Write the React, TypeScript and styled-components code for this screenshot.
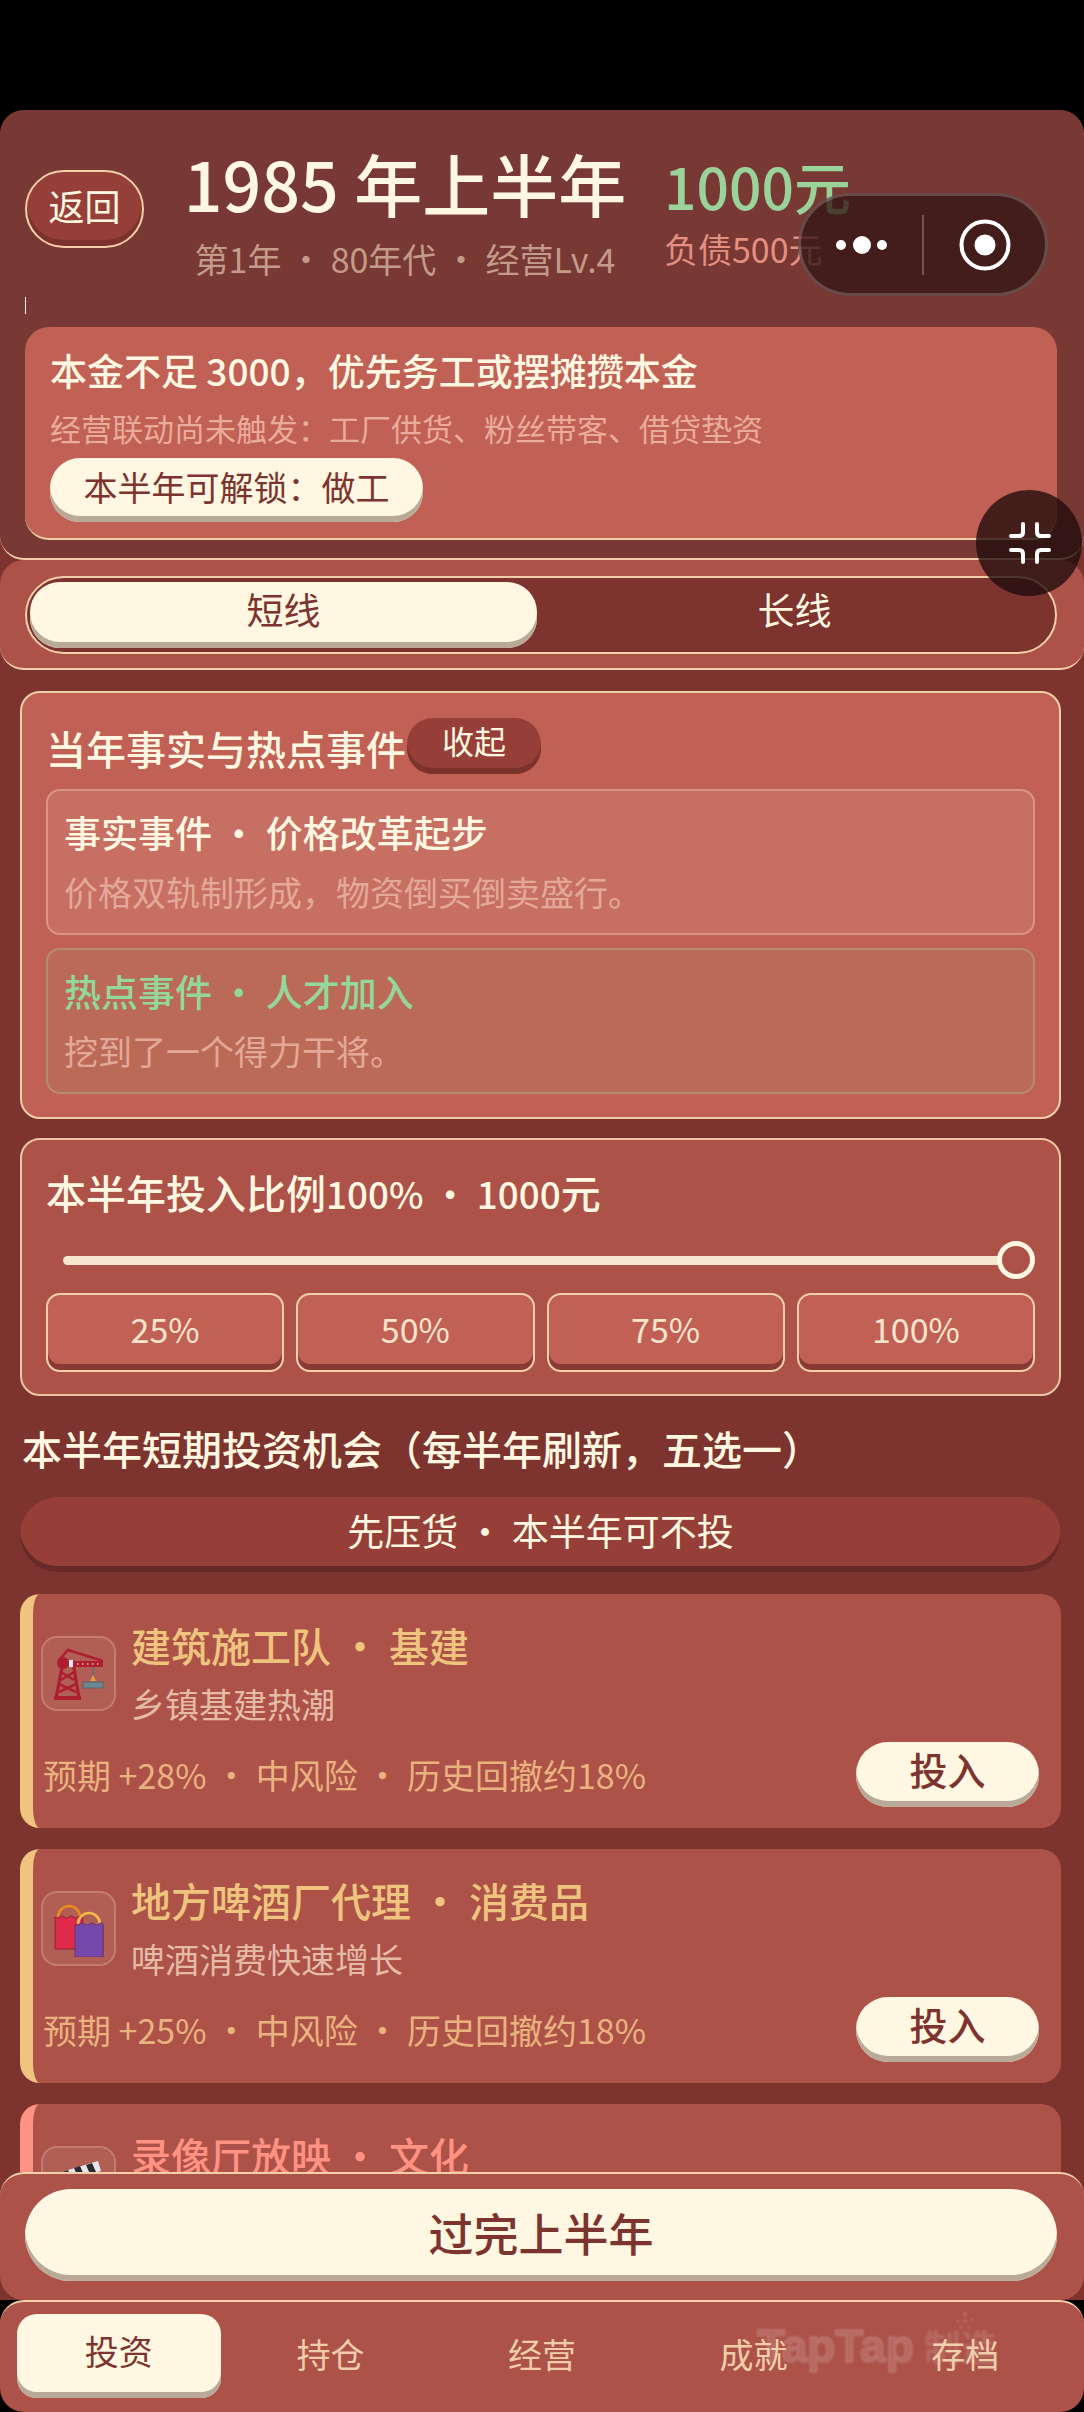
import React from 'react';
import styled, { createGlobalStyle } from 'styled-components';

const GlobalStyle = createGlobalStyle`
  html, body {
    margin: 0;
    padding: 0;
    background: #000;
  }
  * {
    box-sizing: border-box;
  }
`

const CREAM = '#fff7e1'
const LINE = '#f2cfa8'
const DEEP = '#7d332e'
const MID = '#ac5248'
const ROSE = '#c16055'
const BRICK = '#963f38'

const Screen = styled.div`
  position: relative;
  width: 1084px;
  height: 2412px;
  padding-top: 110px;
  background: #000;
  overflow: hidden;
  display: flex;
  flex-direction: column;
  font-family: "Noto Sans CJK SC", "Noto Sans", sans-serif;
  color: ${CREAM};
`

const Panel = styled.div`
  flex: 1;
  min-height: 0;
  display: flex;
  flex-direction: column;
  background: ${DEEP};
  border-radius: 24px 24px 0 0;
  overflow: hidden;
`

const Header = styled.header`
  position: relative;
  flex: none;
  background: #783833;
  border-radius: 24px;
  border-bottom: 2px solid ${LINE};
  padding: 0 27px 18px 25px;
`

const HeaderTop = styled.div`
  height: 217px;
  display: flex;
  align-items: flex-start;
  padding-top: 34px;
`

const BackButton = styled.div`
  flex: none;
  width: 119px;
  height: 78px;
  margin-top: 26px;
  border-radius: 39px;
  border: 2px solid ${LINE};
  background: ${BRICK};
  box-shadow: inset 0 -6px 0 #7b322d;
  display: flex;
  align-items: center;
  justify-content: center;
  padding-bottom: 8px;
  font-size: 36px;
`

const TitleBlock = styled.div`
  flex: none;
  width: 460px;
  margin-left: 31px;
  display: flex;
  flex-direction: column;
  align-items: center;
`

const Title = styled.div`
  font-size: 68px;
  line-height: 78px;
  font-weight: 500;
  white-space: nowrap;
`

const Subtitle = styled.div`
  margin-top: 15px;
  font-size: 34px;
  line-height: 44px;
  color: #c49a88;
  white-space: nowrap;
`

const MoneyBlock = styled.div`
  margin-left: 29px;
  padding-top: 8px;
  display: flex;
  flex-direction: column;
`

const Cash = styled.div`
  font-size: 57px;
  line-height: 66px;
  font-weight: 500;
  color: #9ad39a;
  white-space: nowrap;
`

const Debt = styled.div`
  margin-top: 9px;
  font-size: 34px;
  line-height: 44px;
  color: #e58f80;
  white-space: nowrap;
`

const Artifact = styled.div`
  position: absolute;
  left: 25px;
  top: 187px;
  width: 1px;
  height: 17px;
  background: ${CREAM};
`

const Notice = styled.div`
  height: 213px;
  background: ${ROSE};
  border-radius: 24px;
  border-bottom: 2px solid ${LINE};
  padding: 18px 25px 0;
`

const NoticeTitle = styled.div`
  font-size: 37px;
  line-height: 50px;
  font-weight: 500;
`

const NoticeText = styled.div`
  margin-top: 8px;
  font-size: 31px;
  line-height: 50px;
  color: #e9ab9b;
`

const Chip = styled.div`
  display: inline-flex;
  align-items: center;
  justify-content: center;
  margin-top: 5px;
  width: 373px;
  height: 64px;
  padding-bottom: 8px;
  border-radius: 30px;
  background: ${CREAM};
  box-shadow: inset 0 -6px 0 #b8aa96;
  color: ${DEEP};
  font-size: 34px;
`

const TabPanel = styled.div`
  flex: none;
  background: ${MID};
  border-radius: 24px;
  border-bottom: 2px solid ${LINE};
  padding: 16px 27px 14px 25px;
`

const TabTrack = styled.div`
  height: 78px;
  display: flex;
  padding: 4px 3px;
  background: ${DEEP};
  border: 2px solid ${LINE};
  border-radius: 39px;
`

const TabItem = styled.div<{ $active?: boolean }>`
  flex: ${p => (p.$active ? '0 0 507px' : '1')};
  display: flex;
  align-items: center;
  justify-content: center;
  font-size: 37px;
  border-radius: 30px;
  padding-bottom: 12px;
  background: ${p => (p.$active ? CREAM : 'transparent')};
  box-shadow: ${p => (p.$active ? 'inset 0 -6px 0 #b8aa96' : 'none')};
  color: ${p => (p.$active ? DEEP : CREAM)};
`

const Body = styled.div`
  flex: 1;
  min-height: 0;
  overflow: hidden;
  padding: 21px 23px 0 20px;
  display: flex;
  flex-direction: column;
`

const EventCard = styled.section`
  flex: none;
  height: 428px;
  background: ${ROSE};
  border: 2px solid ${LINE};
  border-radius: 20px;
  padding: 24px 24px 0;
`

const EventHead = styled.div`
  display: flex;
  align-items: center;
  height: 58px;
  margin-bottom: 14px;
`

const SectionTitle = styled.div`
  font-size: 40px;
  line-height: 56px;
  font-weight: 500;
  white-space: nowrap;
`

const EventTitle = styled(SectionTitle)`
  margin-top: 4px;
`

const LatinFigure = styled.span`
  font-size: 0.92em;
`

const CollapseButton = styled.div`
  margin-left: 1px;
  width: 134px;
  height: 56px;
  border-radius: 26px;
  background: ${BRICK};
  box-shadow: inset 0 -6px 0 #7b322d;
  display: flex;
  align-items: center;
  justify-content: center;
  padding-bottom: 12px;
  font-size: 32px;
`

const EventItem = styled.div<{ $hot?: boolean }>`
  height: 146px;
  margin-bottom: 13px;
  padding: 15px 16px 0;
  border-radius: 14px;
  border: 2px solid ${p => (p.$hot ? '#b58c70' : '#dc9488')};
  background: ${p => (p.$hot ? '#bc6a58' : '#c76f63')};
`

const EventName = styled.div<{ $hot?: boolean }>`
  font-size: 37px;
  line-height: 52px;
  font-weight: 500;
  color: ${p => (p.$hot ? '#93d79b' : CREAM)};
`

const EventText = styled.div`
  margin-top: 10px;
  font-size: 34px;
  line-height: 48px;
  color: #e3a998;
`

const StakeCard = styled.section`
  flex: none;
  margin-top: 19px;
  height: 258px;
  background: ${MID};
  border: 2px solid #eec6a4;
  border-radius: 20px;
  padding: 24px 24px 0;
`

const SliderRow = styled.div`
  position: relative;
  margin: 20px 19px 0 17px;
  height: 38px;
  display: flex;
  align-items: center;
`

const SliderTrack = styled.div`
  flex: 1;
  height: 9px;
  border-radius: 5px;
  background: #f6e6cf;
`

const SliderThumb = styled.div`
  position: absolute;
  right: -19px;
  top: 0;
  width: 38px;
  height: 38px;
  border-radius: 50%;
  background: ${MID};
  border: 5px solid ${CREAM};
`

const PercentRow = styled.div`
  margin-top: 14px;
  display: grid;
  grid-template-columns: repeat(4, 1fr);
  gap: 12px;
`

const PercentButton = styled.div`
  height: 79px;
  padding-bottom: 9px;
  display: flex;
  align-items: center;
  justify-content: center;
  font-size: 34px;
  background: ${ROSE};
  border: 2px solid ${LINE};
  border-radius: 14px;
  box-shadow: inset 0 -6px 0 #8a3a34;
  color: #fbe4cc;
`

const ListHead = styled.div`
  margin: 22px 0 0 2px;
  font-size: 40px;
  line-height: 60px;
  font-weight: 500;
  white-space: nowrap;
`

const SkipBar = styled.div`
  flex: none;
  margin: 19px 0 1px;
  height: 75px;
  padding-bottom: 9px;
  border-radius: 38px;
  background: ${BRICK};
  box-shadow: inset 0 -6px 0 #682a26;
  display: flex;
  align-items: center;
  justify-content: center;
  font-size: 37px;
`

const DealCard = styled.article<{ $accent: string }>`
  flex: none;
  height: 234px;
  margin-top: 21px;
  display: flex;
  flex-direction: column;
  background: ${MID};
  border-left: 13px solid ${p => p.$accent};
  border-radius: 20px;
  padding: 0 22px 0 10px;
`

const DealTop = styled.div`
  display: flex;
  align-items: flex-start;
  height: 148px;
  padding-top: 23px;
`

const IconBox = styled.div`
  flex: none;
  width: 75px;
  height: 75px;
  margin: 19px 15px 0 -2px;
  border-radius: 16px;
  border: 2px solid rgba(255, 220, 200, 0.25);
  background: rgba(255, 255, 255, 0.07);
  display: flex;
  align-items: center;
  justify-content: center;
`

const DealName = styled.div<{ $accent: string }>`
  font-size: 40px;
  line-height: 56px;
  font-weight: 500;
  color: ${p => p.$accent};
  white-space: nowrap;
`

const DealSummary = styled.div`
  margin-top: 7px;
  font-size: 34px;
  line-height: 48px;
  color: #e6bba6;
`

const DealBottom = styled.div`
  display: flex;
  align-items: center;
  justify-content: space-between;
`

const DealMeta = styled.div`
  font-size: 34px;
  line-height: 50px;
  color: #e9b27f;
  white-space: nowrap;
`

const InvestButton = styled.div`
  width: 183px;
  height: 65px;
  padding-bottom: 12px;
  border-radius: 32px;
  background: ${CREAM};
  box-shadow: inset 0 -6px 0 #b8aa96;
  display: flex;
  align-items: center;
  justify-content: center;
  color: ${DEEP};
  font-size: 38px;
  font-weight: 500;
`

const ActionBar = styled.div`
  flex: none;
  height: 128px;
  background: ${MID};
  border-top: 2px solid ${LINE};
  border-radius: 24px;
  padding: 15px 27px 0 25px;
`

const NextButton = styled.div`
  height: 92px;
  padding-bottom: 6px;
  border-radius: 46px;
  background: ${CREAM};
  box-shadow: inset 0 -6px 0 #b8aa96;
  display: flex;
  align-items: center;
  justify-content: center;
  color: ${DEEP};
  font-size: 45px;
  font-weight: 500;
`

const BottomNav = styled.nav`
  flex: none;
  position: relative;
  height: 112px;
  background: ${MID};
  border-top: 2px solid ${LINE};
  border-radius: 24px;
  padding: 12px 17px 14px;
  display: grid;
  grid-template-columns: repeat(5, 1fr);
  column-gap: 8px;
`

const NavItem = styled.div<{ $active?: boolean }>`
  display: flex;
  align-items: center;
  justify-content: center;
  font-size: 34px;
  border-radius: 20px;
  padding-bottom: ${p => (p.$active ? 12 : 6)}px;
  background: ${p => (p.$active ? CREAM : 'transparent')};
  box-shadow: ${p => (p.$active ? 'inset 0 -6px 0 #b8aa96' : 'none')};
  color: ${p => (p.$active ? DEEP : '#f0cda8')};
`

const Watermark = styled.div`
  position: absolute;
  left: 757px;
  top: 17px;
  display: flex;
  align-items: center;
  gap: 10px;
  color: rgba(255, 255, 255, 0.13);
  -webkit-text-stroke: 2px rgba(255, 255, 255, 0.13);
  font-family: "Liberation Sans", sans-serif;
  font-size: 46px;
  font-weight: 700;
  white-space: nowrap;
  filter: blur(0.8px);
`

const WatermarkCjk = styled.span`
  font-family: "Noto Sans CJK SC", sans-serif;
  font-size: 37px;
  -webkit-text-stroke: 0;
`

const Sparkle = styled.svg`
  position: absolute;
  left: 196px;
  top: -8px;
`

const Capsule = styled.div`
  position: absolute;
  left: 798px;
  top: 193px;
  width: 250px;
  height: 103px;
  border-radius: 52px;
  background: rgba(52, 22, 20, 0.78);
  border: 3px solid rgba(255, 255, 255, 0.2);
  display: flex;
  align-items: center;
`

const CapsuleSide = styled.div`
  flex: 1;
  display: flex;
  align-items: center;
  justify-content: center;
`

const CapsuleRule = styled.div`
  width: 2px;
  height: 60px;
  background: rgba(255, 255, 255, 0.25);
`

const FloatButton = styled.div`
  position: absolute;
  left: 976px;
  top: 490px;
  width: 106px;
  height: 106px;
  padding-left: 2px;
  border-radius: 50%;
  background: rgba(32, 12, 12, 0.78);
  display: flex;
  align-items: center;
  justify-content: center;
`

const DotsIcon = () => (
  <svg width="54" height="24" viewBox="0 0 54 24">
    <circle cx="6" cy="12" r="5" fill="#fff" />
    <circle cx="27" cy="12" r="9" fill="#fff" />
    <circle cx="47" cy="12" r="5" fill="#fff" />
  </svg>
)

const TargetIcon = () => (
  <svg width="52" height="52" viewBox="0 0 52 52">
    <circle cx="26" cy="26" r="23.5" fill="none" stroke="#fff" strokeWidth="4" />
    <circle cx="26" cy="26" r="10.5" fill="#fff" />
  </svg>
)

const ShrinkIcon = () => (
  <svg width="42" height="42" viewBox="0 0 42 42" fill="none" stroke="#fff" strokeWidth="4" strokeLinecap="round">
    <path d="M14 2v8q0 4-4 4H2" />
    <path d="M28 2v8q0 4 4 4h8" />
    <path d="M14 40v-8q0-4-4-4H2" />
    <path d="M28 40v-8q0-4 4-4h8" />
  </svg>
)

const CraneIcon = () => (
  <svg width="50" height="52" viewBox="0 -2 50 52">
    <path d="M2 48L9 12h10l6 36" fill="none" stroke="#ad1f30" strokeWidth="3.2" />
    <path d="M5 34l17 8M22 34L5 42M7 22l13 8M20 22L7 30" stroke="#ad1f30" strokeWidth="2.6" />
    <rect x="0" y="46" width="27" height="4" fill="#ad1f30" />
    <path d="M5 10L14 0l35 11" fill="none" stroke="#ad1f30" strokeWidth="2.4" />
    <circle cx="9" cy="13" r="6" fill="#ad1f30" />
    <rect x="9" y="11" width="40" height="6" rx="1" fill="#ad1f30" />
    <rect x="15" y="10" width="4" height="7" fill="#e8edf5" />
    <path d="M23 14h1.500M28 14h1.500M33 14h1.500M38 14h1.500M43 14h1.500" stroke="#e88a8a" strokeWidth="2" />
    <path d="M39 17v15" stroke="#6d6f78" strokeWidth="2" />
    <path d="M39 25l3 6h-6z" fill="#e8a03a" />
    <rect x="29" y="32" width="20" height="6" fill="#6b8794" stroke="#59636b" strokeWidth="1" />
  </svg>
)

const BagsIcon = () => (
  <svg width="50" height="56" viewBox="0 0 50 56">
    <path d="M4 16a11 11 0 0 1 22 0" fill="none" stroke="#e88c1f" strokeWidth="2.600" />
    <path d="M1 16q2.300 2.500 4.600 0t4.600 0 4.600 0 4.600 0 4.600 0 4.600 0V48H1z" fill="#df2a49" stroke="#8d2038" strokeWidth="1" />
    <path d="M24 23a11 11 0 0 1 22 0" fill="none" stroke="#f3b84e" strokeWidth="2.600" />
    <path d="M21 23q2.400 2.500 4.800 0t4.800 0 4.800 0 4.800 0 4.800 0 4.200 0V56H21z" fill="#7549ac" stroke="#73305f" strokeWidth="1" />
  </svg>
)

const ClapperIcon = () => (
  <svg width="50" height="50" viewBox="0 0 50 50">
    <path d="M4 14L44 2l3 10L7 24z" fill="#e4e6ea" />
    <path d="M8 13l6-2 4 9-6 2zM20 9l6-2 4 9-6 2zM32 6l6-2 4 9-6 2z" fill="#2a2a30" />
    <rect x="5" y="24" width="42" height="24" fill="#3a3a44" />
  </svg>
)

const deals = [
  {
    name: '建筑施工队 · 基建',
    summary: '乡镇基建热潮',
    meta: '预期 +28% · 中风险 · 历史回撤约18%',
    accent: '#eec47e',
    icon: <CraneIcon />,
  },
  {
    name: '地方啤酒厂代理 · 消费品',
    summary: '啤酒消费快速增长',
    meta: '预期 +25% · 中风险 · 历史回撤约18%',
    accent: '#eec47e',
    icon: <BagsIcon />,
  },
  {
    // the rest of this card sits behind the action bar
    name: '录像厅放映 · 文化',
    accent: '#ff9282',
    icon: <ClapperIcon />,
  },
]

const navItems = ['投资', '持仓', '经营', '成就', '存档']

const App: React.FC = () => {
  return (
    <Screen>
      <GlobalStyle />
      <Panel>
        <Header>
          <Artifact />
          <HeaderTop>
            <BackButton>返回</BackButton>
            <TitleBlock>
              <Title>1985 年上半年</Title>
              <Subtitle>第1年 · 80年代 · 经营Lv.4</Subtitle>
            </TitleBlock>
            <MoneyBlock>
              <Cash>1000元</Cash>
              <Debt>负债500元</Debt>
            </MoneyBlock>
          </HeaderTop>
          <Notice>
            <NoticeTitle>本金不足 3000，优先务工或摆摊攒本金</NoticeTitle>
            <NoticeText>经营联动尚未触发：工厂供货、粉丝带客、借贷垫资</NoticeText>
            <Chip>本半年可解锁：做工</Chip>
          </Notice>
        </Header>

        <TabPanel>
          <TabTrack>
            <TabItem $active>短线</TabItem>
            <TabItem>长线</TabItem>
          </TabTrack>
        </TabPanel>

        <Body>
          <EventCard>
            <EventHead>
              <EventTitle>当年事实与热点事件</EventTitle>
              <CollapseButton>收起</CollapseButton>
            </EventHead>
            <EventItem>
              <EventName>事实事件 · 价格改革起步</EventName>
              <EventText>价格双轨制形成，物资倒买倒卖盛行。</EventText>
            </EventItem>
            <EventItem $hot>
              <EventName $hot>热点事件 · 人才加入</EventName>
              <EventText>挖到了一个得力干将。</EventText>
            </EventItem>
          </EventCard>

          <StakeCard>
            <SectionTitle>
              本半年投入比例<LatinFigure>100% · 1000</LatinFigure>元
            </SectionTitle>
            <SliderRow>
              <SliderTrack />
              <SliderThumb />
            </SliderRow>
            <PercentRow>
              {['25%', '50%', '75%', '100%'].map(label => (
                <PercentButton key={label}>{label}</PercentButton>
              ))}
            </PercentRow>
          </StakeCard>

          <ListHead>本半年短期投资机会（每半年刷新，五选一）</ListHead>
          <SkipBar>先压货 · 本半年可不投</SkipBar>

          {deals.map(deal => (
            <DealCard key={deal.name} $accent={deal.accent}>
              <DealTop>
                <IconBox>{deal.icon}</IconBox>
                <div>
                  <DealName $accent={deal.accent}>{deal.name}</DealName>
                  {deal.summary && <DealSummary>{deal.summary}</DealSummary>}
                </div>
              </DealTop>
              {deal.meta && (
                <DealBottom>
                  <DealMeta>{deal.meta}</DealMeta>
                  <InvestButton>投入</InvestButton>
                </DealBottom>
              )}
            </DealCard>
          ))}
        </Body>

        <ActionBar>
          <NextButton>过完上半年</NextButton>
        </ActionBar>
      </Panel>

      <BottomNav>
        {navItems.map((item, i) => (
          <NavItem key={item} $active={i === 0}>
            {item}
          </NavItem>
        ))}
        <Watermark>
          TapTap<WatermarkCjk>制造</WatermarkCjk>
          <Sparkle width="24" height="20" viewBox="0 0 24 20" fill="rgba(255,255,255,0.16)" stroke="none">
            <circle cx="12" cy="3" r="2" />
            <circle cx="5" cy="10" r="1.600" />
            <circle cx="12" cy="10" r="2" />
            <circle cx="19" cy="9" r="1.600" />
            <circle cx="8" cy="16" r="1.600" />
            <circle cx="16" cy="16" r="1.600" />
          </Sparkle>
        </Watermark>
      </BottomNav>

      <Capsule>
        <CapsuleSide>
          <DotsIcon />
        </CapsuleSide>
        <CapsuleRule />
        <CapsuleSide>
          <TargetIcon />
        </CapsuleSide>
      </Capsule>
      <FloatButton>
        <ShrinkIcon />
      </FloatButton>
    </Screen>
  )
}

export default App
